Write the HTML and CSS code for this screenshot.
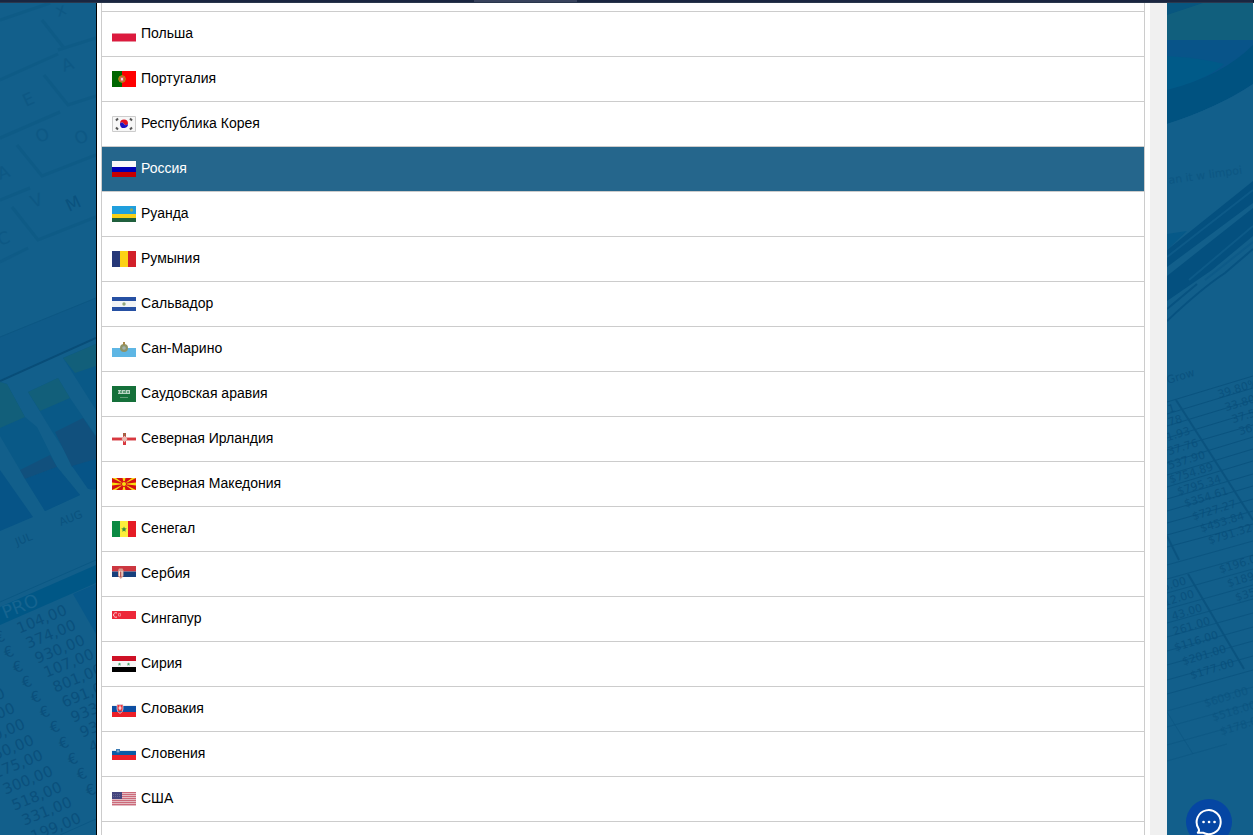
FILE: index.html
```html
<!DOCTYPE html>
<html lang="ru">
<head>
<meta charset="utf-8">
<title>Выбор страны</title>
<link rel="stylesheet" href="styles.css">
</head>
<body>
<div class="topbar"><div class="topbar-tab"></div></div>
<main class="page">
  <div class="scene">
    <svg class="scene-art" viewBox="0 3 96 832" preserveAspectRatio="xMinYMin slice" aria-hidden="true">
      <g fill="none" stroke="#0c5883" stroke-width="3" opacity=".5">
        <path d="M0 80 58 54M58 50 96 38M42 20 64 48M44 75 68 105 96 96M0 138 60 112M17 145 42 176 96 155M0 200 30 188M12 207 38 240 96 217M0 262 28 248"/>
        <path d="M0 20 50 3"/>
      </g>
      <g class="keys">
        <text transform="translate(58 17) rotate(-20)">x</text>
        <text transform="translate(64 72) rotate(-20)">A</text>
        <text transform="translate(26 107) rotate(-25)">E</text>
        <text transform="translate(38 143) rotate(-20)">O</text>
        <text transform="translate(77 145) rotate(-20)">O</text>
        <text transform="translate(0 180) rotate(-20)">A</text>
        <text transform="translate(33 208) rotate(-20)">V</text>
        <text class="key-dark" transform="translate(69 212) rotate(-25)">M</text>
        <text transform="translate(0 246) rotate(-20)">C</text>
      </g>
      <path d="M0 337 96 298V338L0 380Z" fill="#0f5b89"/>
      <path d="M0 337 96 298" stroke="#0d5783"/>
      <path d="M0 381 96 338" stroke="#084d78" stroke-width="2"/>
      <path d="M0 382 7 384 25 417 37 427 57 467 80 495 45 511 20 470 0 436Z" fill="#095987"/>
      <path d="M0 382 7 384 25 417 0 428Z" fill="#125f7a"/>
      <path d="M20 470 50 455 57 467 25 479Z" fill="#11507d"/>
      <path d="M25 479 57 467 80 495 45 511Z" fill="#065487"/>
      <path d="M28 392 58 378 70 398 96 436V490L90 490 53 433Z" fill="#095987"/>
      <path d="M28 392 58 378 70 398 40 411Z" fill="#125f7a"/>
      <path d="M55 432 83 418 96 437V462L72 467Z" fill="#11507d"/>
      <path d="M72 466 96 459V489H88Z" fill="#065487"/>
      <path d="M63 358 96 344V410Z" fill="#095987"/>
      <path d="M63 358 96 344V366L75 373Z" fill="#125f7a"/>
      <path d="M0 470 33 517 0 531Z" fill="#065487"/>
      <g class="months">
        <text transform="translate(17 546) rotate(-22)">JUL</text>
        <text transform="translate(61 526) rotate(-22)">AUG</text>
      </g>
      <path d="M0 602 96 560" stroke="#0b5884"/>
      <path d="M0 607 96 565V583L0 625Z" fill="#005786"/>
      <path d="M73 594 96 584V634Z" fill="#07588a"/>
      <text class="sheet-title" transform="translate(5 619) rotate(-22)">PRO</text>
      <g class="sums">
        <text transform="translate(68 614) rotate(-22)">104,00</text>
        <text transform="translate(77 629) rotate(-22)">374,00</text>
        <text transform="translate(86 644) rotate(-22)">930,00</text>
        <text transform="translate(95 658) rotate(-22)">107,00</text>
        <text transform="translate(104 673) rotate(-22)">801,00</text>
        <text transform="translate(113 688) rotate(-22)">691,00</text>
        <text transform="translate(122 703) rotate(-22)">933,00</text>
        <text transform="translate(131 718) rotate(-22)">937,00</text>
        <text transform="translate(140 733) rotate(-22)">412,00</text>
        <text transform="translate(6 640) rotate(-22)">€</text>
        <text transform="translate(15 655) rotate(-22)">€</text>
        <text transform="translate(24 670) rotate(-22)">€</text>
        <text transform="translate(33 685) rotate(-22)">€</text>
        <text transform="translate(42 700) rotate(-22)">€</text>
        <text transform="translate(51 715) rotate(-22)">€</text>
        <text transform="translate(61 730) rotate(-22)">€</text>
        <text transform="translate(70 746) rotate(-22)">€</text>
        <text transform="translate(79 762) rotate(-22)">€</text>
        <text transform="translate(88 777) rotate(-22)">€</text>
        <text transform="translate(97 793) rotate(-22)">€</text>
        <text transform="translate(6 697) rotate(-22)">10,00</text>
        <text transform="translate(16 712) rotate(-22)">20,00</text>
        <text transform="translate(26 728) rotate(-22)">40,00</text>
        <text transform="translate(35 744) rotate(-22)">50,00</text>
        <text transform="translate(44 759) rotate(-22)">175,00</text>
        <text transform="translate(54 775) rotate(-22)">300,00</text>
        <text transform="translate(63 791) rotate(-22)">518,00</text>
        <text transform="translate(73 806) rotate(-22)">331,00</text>
        <text transform="translate(82 822) rotate(-22)">199,00</text>
      </g>
      <path d="M60 835 96 819" stroke="#0b5884"/>
    </svg>
  </div>

  <div class="content">
    <div class="panel">
      <ul class="countries">
        <li class="cut"></li>
        <li><button type="button"><svg class="flag" viewBox="0 0 24 16"><path fill="#e6e6e9" d="M0 7h24v1H0z"/><path fill="#dc1a3e" d="M0 8h24v7H0z"/><path fill="#e8919f" d="M0 7h24v1H0zM0 15h24v1H0z"/></svg><span>Польша</span></button></li>
        <li><button type="button"><svg class="flag" viewBox="0 0 24 16"><path fill="#060" d="M0 0h10v16H0z"/><path fill="#f00" d="M10 0h14v16H10z"/><circle cx="10" cy="8" r="3.3" fill="#a96a10" stroke="#b98a1c"/><path fill="#f3dcd8" stroke="#d55" d="M8.500 6.300h3v3l-1.500 1-1.500-1z"/></svg><span>Португалия</span></button></li>
        <li><button type="button"><svg class="flag" viewBox="0 0 24 16"><path fill="#f7f7f7" stroke="#ccc" d="M.5.5h23v15H.5z"/><path fill="#e01020" d="M8 7.600a4 4 0 0 1 8 0c-1 2-3 2-4 .4s-3-2-4-.4"/><path fill="#1c10c0" d="M8 7.600c1-1.600 3-1.200 4 .4s3 1.600 4-.4a4 4 0 0 1-8 .8z"/><path stroke="#555" stroke-width="2" d="m4 4.500 2-2m12 0 2 2M4 11.500l2 2m12 0 2-2"/></svg><span>Республика Корея</span></button></li>
        <li><button type="button" class="selected" aria-pressed="true"><svg class="flag" viewBox="0 0 24 16"><path fill="#f8f8f8" d="M0 0h24v6H0z"/><path fill="#0000b4" d="M0 6h24v5H0z"/><path fill="#c80000" d="M0 11h24v5H0z"/></svg><span>Россия</span></button></li>
        <li><button type="button"><svg class="flag" viewBox="0 0 24 16"><path fill="#209fdd" d="M0 0h24v8H0z"/><path fill="#f8d018" d="M0 8h24v4H0z"/><path fill="#20603d" d="M0 12h24v4H0z"/><circle cx="19.500" cy="4" r="1.700" fill="#93a95c"/></svg><span>Руанда</span></button></li>
        <li><button type="button"><svg class="flag" viewBox="0 0 24 16"><path fill="#263878" d="M0 0h8v16H0z"/><path fill="#fcd116" d="M8 0h8v16H8z"/><path fill="#d2202a" d="M16 0h8v16h-8z"/></svg><span>Румыния</span></button></li>
        <li><button type="button"><svg class="flag" viewBox="0 0 24 16"><path fill="#2650a3" d="M0 1h24v4H0zM0 11h24v4H0z"/><path fill="#f2f4f5" d="M0 5h24v6H0z"/><circle cx="12" cy="8" r="1.700" fill="#92a77d"/></svg><span>Сальвадор</span></button></li>
        <li><button type="button"><svg class="flag" viewBox="0 0 24 16"><path fill="#5eb6e4" d="M0 8V7h24v9H0z"/><circle cx="12" cy="7" r="4" fill="#8e9468"/><circle cx="12" cy="7" r="1.800" fill="#a1b2ae"/><path stroke="#a98a4b" stroke-width="2" d="M12 1v3"/></svg><span>Сан-Марино</span></button></li>
        <li><button type="button"><svg class="flag" viewBox="0 0 24 16"><path fill="#15703a" d="M0 0h24v16H0z"/><path fill="#5f9d78" d="M6 4h12v4H6z"/><path stroke="#b8d3c2" d="M6 4.500h3m1 0h3m1 0h4M6 7.500h12M7.500 4v4m3-4v4m4-4v4m3-4v4"/><path stroke="#629d78" d="M8 11.500h8"/></svg><span>Саудовская аравия</span></button></li>
        <li><button type="button"><svg class="flag" viewBox="0 0 24 16"><path fill="#d8383f" d="M0 6h24v4H0zM11 2h3v12h-3z"/><path stroke="#eba5a8" d="M0 6.500h24M0 9.500h24"/><path fill="#e9bdb4" d="m12.500 4.500 1.500 2 1.500 1.500-1.500 1.500-1.500 2-1.500-2L9.500 8 11 6.500z"/><path stroke="#917048" stroke-width="2" d="M12.500 2v3"/></svg><span>Северная Ирландия</span></button></li>
        <li><button type="button"><svg class="flag" viewBox="0 0 24 16"><path fill="#d51014" d="M0 2h24v12H0z"/><path fill="#f8dc12" d="M0 2h4l8 6zM24 2h-4l-8 6zM0 14h4l8-6zM24 14h-4l-8-6zM10.500 2h3L12 8zM10.500 14h3L12 8zM0 6.500v3L12 8zM24 6.500v3L12 8z"/><circle cx="12" cy="8" r="2.500" fill="#f8dc12" stroke="#d51014"/></svg><span>Северная Македония</span></button></li>
        <li><button type="button"><svg class="flag" viewBox="0 0 24 16"><path fill="#0b8a43" d="M0 0h8v16H0z"/><path fill="#fcee3c" d="M8 0h8v16H8z"/><path fill="#e51b25" d="M16 0h8v16h-8z"/><path fill="#3b9140" d="m12 5.500.8 1.700 2 .3-1.500 1.300.4 2-1.700-1-1.700 1 .4-2-1.500-1.300 2-.3z"/></svg><span>Сенегал</span></button></li>
        <li><button type="button"><svg class="flag" viewBox="0 0 24 16"><path fill="#cc3740" d="M0 0h24v5.500H0z"/><path fill="#17407c" d="M0 5.500h24V11H0z"/><path fill="#d99b91" d="M6 4.500 7 2.500h3.500l1 2V10l-2.700 3L6 10z"/><path stroke="#f6e7df" d="M7.500 5v5m2.500-5v5"/><path stroke="#b64643" d="M8.700 6v5"/></svg><span>Сербия</span></button></li>
        <li><button type="button"><svg class="flag" viewBox="0 0 24 16"><path fill="#ed2739" d="M0 0h24v8H0z"/><path fill="none" stroke="#fad3d7" d="M5 2a2.300 2.300 0 1 0 0 4"/><path fill="none" stroke="#f0808c" d="M6.500 2.500h2v2.500h-2z"/></svg><span>Сингапур</span></button></li>
        <li><button type="button"><svg class="flag" viewBox="0 0 24 16"><path fill="#ce1126" d="M0 0h24v5H0z"/><path fill="#f6f6f6" d="M0 5h24v6H0z"/><path fill="#000" d="M0 11h24v5H0z"/><path fill="#4aa168" d="m7.500 6.500.5 1 1.200.2-.9.800.3 1.200-1.100-.6-1.100.6.300-1.200-.9-.8 1.200-.2zM16.500 6.500l.5 1 1.200.2-.9.800.3 1.200-1.100-.6-1.100.6.300-1.200-.9-.8 1.200-.2z"/></svg><span>Сирия</span></button></li>
        <li><button type="button"><svg class="flag" viewBox="0 0 24 16"><path fill="#eee" d="M0 4h24v1H0z"/><path fill="#0d4ea2" d="M0 5h24v6H0z"/><path fill="#ed1f28" d="M0 11h24v5H0z"/><path fill="#ed3740" stroke="#d9dce8" stroke-width=".7" d="M5 3.500h6V8q0 3-3 4.500Q5 11 5 8z"/><path stroke="#fff" d="M8 4.500V9M6.500 7h3"/><path stroke="#315fa8" d="M6.500 10.500h3"/></svg><span>Словакия</span></button></li>
        <li><button type="button"><svg class="flag" viewBox="0 0 24 16"><path fill="#e8eaee" d="M0 4h24v1H0z"/><path fill="#0a5ba6" d="M0 5h24v4H0z"/><path fill="#ed1f28" d="M0 9h24v5H0z"/><path fill="#3c7cb5" d="M4 3h4v3L6 7.500 4 6z"/><path fill="#e6eef5" d="M5 5.500 6 4l1 1.500z"/></svg><span>Словения</span></button></li>
        <li><button type="button"><svg class="flag" viewBox="0 0 24 16"><path fill="#e3bcc3" d="M0 1h24v14H0z"/><path stroke="#cc6a7a" d="M0 1.500h24M0 3.500h24M0 5.500h24M0 7.500h24M0 9.500h24M0 11.500h24M0 13.500h24"/><path fill="#46467f" d="M0 1h10v7H0z"/><path stroke="#66668f" stroke-dasharray="1" d="M1 3.500h8M1 5.500h8"/></svg><span>США</span></button></li>
        <li class="rest"></li>
      </ul>
    </div>
    <div class="scroll-track"></div>
  </div>

  <div class="scene scene-right">
    <svg class="scene-art" viewBox="0 3 86 832" preserveAspectRatio="xMinYMin slice" aria-hidden="true">
      <path fill="#115f7d" d="M0 3h86v38H0z"/>
      <path fill="#08567f" d="M0 3h36L0 15z"/>
      <path fill="#085489" d="M0 40h86v60H0z"/>
      <path fill="#005a88" d="M0 56Q35 58 57 64 40 80 0 91Z"/>
      <path fill="#005280" d="M0 90Q55 76 86 45V84Q50 108 0 124Z"/>
      <path fill="#125f8b" d="M0 124Q50 108 86 84V150H0Z"/>
      <text class="blur-note" transform="translate(2 184) rotate(-8)">an it w limpoi</text>
      <path fill="#065988" d="M0 234 20 231 0 250Z"/>
      <path fill="#04507f" d="M0 250 86 181V203L0 267Z"/>
      <path fill="#04507f" d="M0 276 86 208V236L45 270 0 301Z"/>
      <path fill="none" stroke="#0d5a88" stroke-width="2" d="M22 280 86 226M38 280 86 242M0 257 86 190"/>
      <path fill="none" stroke="#075280" stroke-width="2" d="M0 321Q35 288 58 273L86 249M0 309 30 284"/>
      <g class="cells">
        <text class="grow" transform="translate(1 384) rotate(-17)">Grow</text>
        <text transform="translate(9 411) rotate(-17)">1</text>
        <text transform="translate(16 422) rotate(-17)">78</text>
        <text transform="translate(24 434) rotate(-17)">1.93</text>
        <text transform="translate(32 446) rotate(-17)">37.76</text>
        <text transform="translate(39 458) rotate(-17)">537.90</text>
        <text transform="translate(47 470) rotate(-17)">$754.89</text>
        <text transform="translate(55 482) rotate(-17)">$795.34</text>
        <text transform="translate(62 494) rotate(-17)">$354.61</text>
        <text transform="translate(70 507) rotate(-17)">$727.27</text>
        <text transform="translate(78 519) rotate(-17)">$453.84</text>
        <text transform="translate(86 531) rotate(-17)">$791.32</text>
        <text transform="translate(92 386) rotate(-17)">39.80%</text>
        <text transform="translate(99 399) rotate(-17)">33.80%</text>
        <text transform="translate(106 411) rotate(-17)">37.50%</text>
        <text transform="translate(113 423) rotate(-17)">36.10%</text>
        <text transform="translate(20 584) rotate(-17)">6.00</text>
        <text transform="translate(28 597) rotate(-17)">12.00</text>
        <text transform="translate(36 611) rotate(-17)">43.00</text>
        <text transform="translate(44 624) rotate(-17)">261.00</text>
        <text transform="translate(52 638) rotate(-17)">$116.00</text>
        <text transform="translate(60 652) rotate(-17)">$201.00</text>
        <text transform="translate(68 666) rotate(-17)">$177.00</text>
        <text transform="translate(97 560) rotate(-17)">$196.00</text>
        <text transform="translate(105 574) rotate(-17)">$189.00</text>
        <text transform="translate(113 588) rotate(-17)">$351.00</text>
      </g>
      <g class="cells faint">
        <text transform="translate(82 694) rotate(-17)">$609.00</text>
        <text transform="translate(90 708) rotate(-17)">$518.00</text>
        <text transform="translate(98 722) rotate(-17)">$178.00</text>
      </g>
      <g fill="none" stroke="#084f7b" opacity=".7">
        <path d="M0 402 86 376M0 414 86 388M0 426 86 400M0 438 86 412M0 450 86 425M0 463 86 437M0 475 86 449M0 487 86 461M0 499 86 474M0 511 86 486M0 523 86 499M0 535 86 511M0 547 86 524"/>
        <path stroke-width="2" d="M9 400 86 520M0 536 12 560M21 574 77 669"/>
        <path opacity=".8" d="M0 565 86 541M0 579 86 555M0 593 86 569M0 609 86 585M0 623 86 599M0 637 86 613M0 651 86 627M0 665 86 641M0 680 86 656M0 694 86 670"/>
        <path opacity=".5" d="M0 711 86 687M0 727 86 703M0 745 86 721M0 761 60 744M0 712 26 754"/>
      </g>
    </svg>
    <button type="button" class="chat" aria-label="Чат">
      <svg viewBox="0 0 46 46" fill="none" stroke="#fff" stroke-width="2"><path stroke-linejoin="round" d="M12.500 29.500a12 12 0 1 1 4.500 4.200H11.800q2-1.700.7-4.200z"/><path stroke-width="2.600" stroke-linecap="round" d="M17.500 23h.1M23 23h.1M28.500 23h.1"/></svg>
    </button>
  </div>
</main>
</body>
</html>
```
FILE: styles.css
```css
* {
  box-sizing: border-box;
}

body {
  margin: 0;
  height: 100vh;
  display: flex;
  flex-direction: column;
  overflow: hidden;
  background: #fff;
  color: #000;
  font-family: "Liberation Sans", Arial, sans-serif;
  font-size: 14px;
}

.topbar {
  flex: none;
  height: 3px;
  background: #1a2640;
  border-bottom: 1px solid #2a374d;
}

.topbar-tab {
  width: 103px;
  height: 2px;
  margin-left: 474px;
  background: #38425c;
}

.page {
  flex: 1;
  min-height: 0;
  display: grid;
  grid-template-columns: 96px 1fr 87px;
  grid-template-rows: 100%;
}

.scene {
  position: relative;
  overflow: hidden;
  background: #125f8b;
}

.scene-right {
  border-right: 1px solid #fff;
}

.scene-art {
  display: block;
  width: 100%;
  height: 100%;
}

.scene-art text {
  font-family: "DejaVu Sans", sans-serif;
  fill: #0a527e;
}

.keys text {
  font-size: 17px;
  opacity: 0.5;
}

.keys .key-dark {
  opacity: 1;
}

.months text {
  font-size: 11px;
}

.scene-art .sheet-title {
  font-size: 18px;
  fill: #166490;
}

.sums text {
  font-size: 15px;
  text-anchor: end;
  fill: #0a507c;
}

.scene-art .blur-note {
  font-size: 11px;
  opacity: 0.6;
}

.cells text {
  font-size: 11px;
  text-anchor: end;
}

.cells .grow {
  text-anchor: start;
}

.faint {
  opacity: 0.6;
}

.content {
  display: flex;
  min-width: 0;
  border-left: 1px solid #000;
}

.panel {
  flex: 1;
  min-width: 0;
  padding: 0 5px 0 4px;
}

.scroll-track {
  width: 17px;
  background: #f0f0f0;
}

.countries {
  display: flex;
  flex-direction: column;
  height: 100%;
  margin: 0;
  padding: 0;
  list-style: none;
  border: solid #ccc;
  border-width: 0 1px;
}

.countries li {
  flex: none;
  border-bottom: 1px solid #ccc;
}

.countries .cut {
  height: 9px;
}

.countries .rest {
  flex: 1;
  border: 0;
}

.countries button {
  display: flex;
  align-items: center;
  gap: 5px;
  width: 100%;
  height: 44px;
  padding: 0 10px;
  border: 0;
  background: none;
  color: inherit;
  font: inherit;
  line-height: 18px;
  text-align: left;
  cursor: pointer;
}

.countries span {
  padding-bottom: 2px;
}

.countries .selected {
  background: #25668c;
  color: #fff;
}

.flag {
  flex: none;
  width: 24px;
  height: 16px;
}

.chat {
  position: absolute;
  right: 21px;
  bottom: -10px;
  width: 46px;
  height: 46px;
  padding: 0;
  border: 0;
  border-radius: 50%;
  background: #0546a3;
  cursor: pointer;
}

.chat svg {
  display: block;
}
```
